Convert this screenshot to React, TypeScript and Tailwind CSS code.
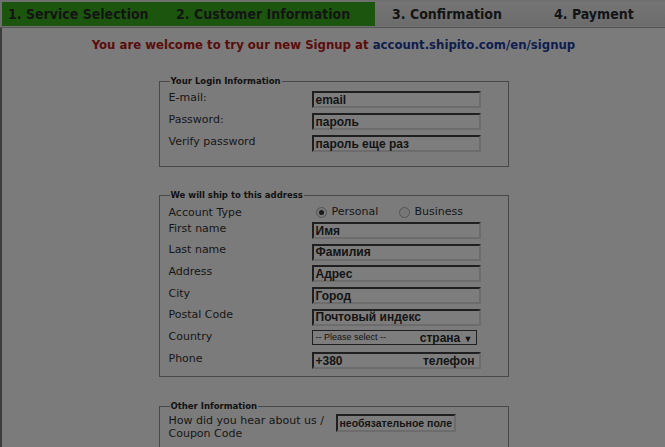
import React from "react";

const verdana = { fontFamily: '"DejaVu Sans", Verdana, sans-serif' };

function Input({ value, right }: { value: string; right?: string }) {
  return (
    <div className="flex h-[17px] w-[169px] items-center justify-between border-2 border-t-[#1f1f1f] border-l-[#1f1f1f] border-r-[#6c6c6c] border-b-[#6c6c6c] bg-[#7d7d7d] pl-[2px] pr-[4px] font-['Liberation_Sans',Arial,sans-serif] text-[12px] font-bold leading-none text-[#141414]">
      <span>{value}</span>
      {right && <span>{right}</span>}
    </div>
  );
}

function Row({ label, children, tight }: { label: string; children: React.ReactNode; tight?: boolean }) {
  return (
    <div className={"grid grid-cols-[143px_1fr] items-start " + (tight ? "h-[21.7px]" : "h-[22px]")}>
      <div className="pt-[0.5px] text-[11px] leading-[14px] text-[#161616]" style={verdana}>{label}</div>
      <div className="pt-[1px]">{children}</div>
    </div>
  );
}

function Box({ title, children, className }: { title: string; children: React.ReactNode; className?: string }) {
  return (
    <fieldset className={"mx-auto w-[350px] border border-[#484848] px-[9px] " + (className ?? "")}>
      <legend className="ml-[1px] px-[1px] text-[8.5px] font-bold leading-[10px] text-[#111]" style={verdana}>{title}</legend>
      {children}
    </fieldset>
  );
}

function Radio({ checked }: { checked?: boolean }) {
  return (
    <span className="inline-flex h-[11px] w-[11px] items-center justify-center rounded-full border border-[#555] bg-[#777]">
      {checked && <span className="h-[5px] w-[5px] rounded-full bg-[#1a1a1a]" />}
    </span>
  );
}

export default function App() {
  return (
    <div className="h-[447px] w-[665px] overflow-hidden bg-[#7b7b7b]">
      <div className="flex h-[28px] border-b border-[#555] bg-[#707070] pt-[2px] text-[14px] font-bold leading-none text-[#141414]" style={{ fontFamily: '"DejaVu Sans Condensed", "DejaVu Sans", Tahoma, sans-serif' }}>
        <div className="ml-[2px] flex h-[24px] w-[373px] items-center bg-[#1c560e] pl-[6px]">
          <span className="w-[168px]">1. Service Selection</span>
          <span>2. Customer Information</span>
        </div>
        <div className="flex h-[24px] flex-1 items-center bg-gradient-to-b from-[#757575] to-[#6c6c6c]">
          <span className="ml-[17px] w-[162px]">3. Confirmation</span>
          <span>4. Payment</span>
        </div>
      </div>
      <div className="h-[419px] border-l-2 border-[#3c3c3c]">
        <div className="pt-[9px] text-center text-[13px] font-bold leading-[16px]" style={{ fontFamily: '"DejaVu Sans Condensed", "DejaVu Sans", Tahoma, sans-serif' }}>
          <span className="text-[#5a0c0c]">You are welcome to try our new Signup at </span>
          <span className="text-[#0f1d4d]">account.shipito.com/en/signup</span>
        </div>

        <div className="mt-[23px]">
          <Box title="Your Login Information" className="h-[91px] pt-[4px]">
            <Row label="E-mail:"><Input value="email" /></Row>
            <Row label="Password:"><Input value="пароль" /></Row>
            <Row label="Verify password"><Input value="пароль еще раз" /></Row>
          </Box>
        </div>

        <div className="mt-[23px]">
          <Box title="We will ship to this address" className="h-[187px] pt-[4px]">
            <div className="grid h-[17px] grid-cols-[143px_1fr] items-center">
              <div className="text-[11px] leading-[14px] text-[#161616]" style={verdana}>Account Type</div>
              <div className="flex items-center text-[11px] text-[#161616]" style={verdana}>
                <span className="ml-[4px]"><Radio checked /></span>
                <span className="ml-[5px] w-[67px]">Personal</span>
                <Radio />
                <span className="ml-[5px]">Business</span>
              </div>
            </div>
            <Row tight label="First name"><Input value="Имя" /></Row>
            <Row tight label="Last name"><Input value="Фамилия" /></Row>
            <Row tight label="Address"><Input value="Адрес" /></Row>
            <Row tight label="City"><Input value="Город" /></Row>
            <Row tight label="Postal Code"><Input value="Почтовый индекс" /></Row>
            <Row tight label="Country">
              <div className="flex h-[15px] w-[165px] items-center justify-between border border-[#1f1f1f] bg-[#7d7d7d] pl-[3px] pr-[3px] font-['Liberation_Sans',Arial,sans-serif] leading-none text-[#111]">
                <span className="text-[9px]">-- Please select --</span>
                <span className="text-[12px] font-bold">страна <span className="text-[9px]">▼</span></span>
              </div>
            </Row>
            <Row tight label="Phone"><Input value="+380" right="телефон" /></Row>
          </Box>
        </div>

        <div className="mt-[24px]">
          <Box title="Other Information" className="h-[60px] pt-[3px]">
            <div className="flex items-start">
              <div className="w-[167px] text-[11px] leading-[13px] text-[#161616]" style={verdana}>How did you hear about us /<br />Coupon Code</div>
              <div className="flex h-[18px] w-[120px] items-center whitespace-nowrap border-2 border-t-[#1f1f1f] border-l-[#1f1f1f] border-r-[#6c6c6c] border-b-[#6c6c6c] bg-[#7d7d7d] pl-[2px] font-['Liberation_Sans',Arial,sans-serif] text-[10.5px] font-bold leading-none text-[#141414]">необязательное поле</div>
            </div>
          </Box>
        </div>
      </div>
    </div>
  );
}
